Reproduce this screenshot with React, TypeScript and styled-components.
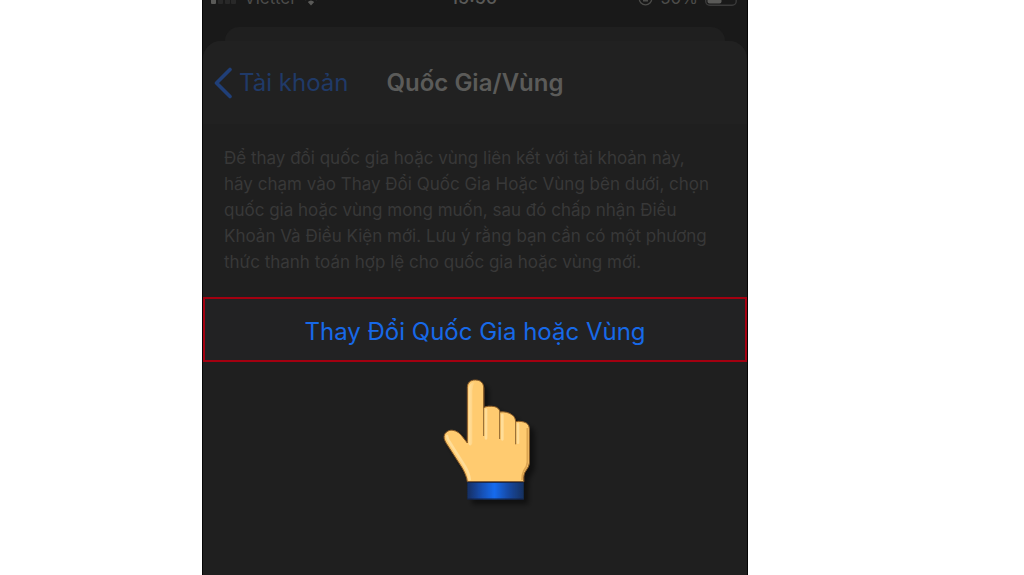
import React from "react";
import styled, { createGlobalStyle } from "styled-components";

const GlobalStyle = createGlobalStyle`
  * { box-sizing: border-box; }
  body {
    margin: 0;
    background: #ffffff;
    font-family: Inter, "Liberation Sans", sans-serif;
  }
`;

const Page = styled.main`
  display: grid;
  grid-template-columns: 202fr 546fr 276fr;
  min-height: 100vh;
  overflow: hidden;
`;

const Phone = styled.section`
  grid-column: 2;
  display: flex;
  flex-direction: column;
  background: #191919;
  border: solid #050505;
  border-width: 0 1px;
`;

const StatusBar = styled.div`
  height: 27px;
  padding: 0 10px 0 8px;
`;

const StatusRow = styled.div`
  display: grid;
  grid-template-columns: 1fr auto 1fr;
  align-items: center;
  margin-top: -13px;
  font-size: 17px;
  line-height: 22px;
  color: #4c4c4a;
`;

const StatusGroup = styled.div<{ $end?: boolean }>`
  display: flex;
  align-items: center;
  gap: 7px;
  justify-content: ${(p) => (p.$end ? "flex-end" : "flex-start")};
`;

const Clock = styled.time`
  font-size: 18px;
  font-weight: 500;
  color: #5a5a58;
`;

const BackSheet = styled.div`
  height: 14px;
  margin: 0 22px;
  border-radius: 14px 14px 0 0;
  background: #1f1f1f;
`;

const Sheet = styled.div`
  flex: 1;
  border-radius: 18px 18px 0 0;
  background: #1f1f1f;
`;

const NavBar = styled.header`
  display: grid;
  grid-template-columns: 1fr auto 1fr;
  align-items: center;
  height: 83px;
  padding: 0 11px;
  border-radius: 18px 18px 0 0;
  background: #212121;
`;

const BackLink = styled.a`
  display: flex;
  align-items: center;
  gap: 7px;
  color: #203a68;
  font-size: 24px;
  line-height: 32px;
  text-decoration: none;
  white-space: nowrap;
`;

const Title = styled.h1`
  margin: 0;
  color: #5b5b59;
  font-size: 24px;
  font-weight: 600;
  line-height: 32px;
  white-space: nowrap;
`;

const Description = styled.p`
  margin: 0;
  padding: 21px 20px 22px 21px;
  color: #383838;
  font-size: 17px;
  line-height: 26px;
`;

const Line = styled.span`
  display: block;
  white-space: nowrap;
`;

const ChangeButton = styled.button`
  display: block;
  width: 100%;
  height: 65px;
  padding: 4px 0 0;
  border: 2px solid #a30010;
  background: #222223;
  color: #1769e8;
  font-family: inherit;
  font-size: 24px;
  line-height: 32px;
`;

const Pointer = styled.div`
  display: flex;
  justify-content: center;
  padding-top: 8px;
`;

const paragraph = [
  "Để thay đổi quốc gia hoặc vùng liên kết với tài khoản này,",
  "hãy chạm vào Thay Đổi Quốc Gia Hoặc Vùng bên dưới, chọn",
  "quốc gia hoặc vùng mong muốn, sau đó chấp nhận Điều",
  "Khoản Và Điều Kiện mới. Lưu ý rằng bạn cần có một phương",
  "thức thanh toán hợp lệ cho quốc gia hoặc vùng mới.",
];

const SignalIcon = () => (
  <svg width="26" height="14" viewBox="0 0 26 14" aria-hidden="true">
    <rect x="0" y="6" width="5" height="7" rx="1" fill="#5a5a58" />
    <rect x="7" y="4" width="5" height="9" rx="1" fill="#282828" />
    <rect x="14" y="2" width="5" height="11" rx="1" fill="#282828" />
    <rect x="20" y="0" width="5" height="13" rx="1" fill="#282828" />
  </svg>
);

const WifiIcon = () => (
  <svg width="20" height="15" viewBox="0 0 20 15" aria-hidden="true">
    <path d="M1 4.5Q10-3 19 4.5M4 8.500Q10 3 16 8.500" fill="none" stroke="#5a5a58" strokeWidth="2.4" />
    <path d="M6.8 11Q10 8 13.2 11L10 14.5Z" fill="#5a5a58" />
  </svg>
);

const RotationLockIcon = () => (
  <svg width="15" height="15" viewBox="0 0 15 15" aria-hidden="true">
    <circle cx="7.5" cy="7.5" r="6.300" fill="none" stroke="#4c4c4a" strokeWidth="1.3" />
    <path d="M5 6.500h5v4H5z" fill="#4c4c4a" />
    <path d="M6 7V5.500a1.500 1.500 0 0 1 3 0V7" fill="none" stroke="#4c4c4a" />
  </svg>
);

const BatteryIcon = () => (
  <svg width="32" height="15" viewBox="0 0 32 15" aria-hidden="true">
    <rect x="0.700" y="0.700" width="30.500" height="13.500" rx="4" fill="none" stroke="#3a3a3a" strokeWidth="1.400" />
    <rect x="2.500" y="2.500" width="14" height="10" rx="2" fill="#5a5a58" />
  </svg>
);

const ChevronLeft = () => (
  <svg width="18" height="32" viewBox="0 0 18 32" aria-hidden="true">
    <path d="M16 2.500L2.500 16L16 29.500" fill="none" stroke="#203f78" strokeWidth="3.600" strokeLinecap="round" strokeLinejoin="round" />
  </svg>
);

const handShape =
  "M112 335C111 322 103 305 96 293L49 220C43 210 40 202 44 193C48 185 58 179 69 181C81 183 90 190 98 201L112 219V53C112 38 121 30 136 30C152 30 161 39 161 54V113C169 108 183 108 194 110C203 112 209 118 210 126C221 124 238 127 248 136C254 141 256 147 257 155C267 153 280 154 289 159C295 163 298 169 298 178V279C298 295 281 303 281 320V335Z";

const PointingHand = () => (
  <svg width="150" height="145" viewBox="-90 0 450 435" role="img" aria-label="Bàn tay chỉ lên">
    <defs>
      <linearGradient id="cuff">
        <stop offset="0" stopColor="#132d60" />
        <stop offset="0.260" stopColor="#1650b4" />
        <stop offset="0.480" stopColor="#166bee" />
        <stop offset="0.740" stopColor="#1648a0" />
        <stop offset="1" stopColor="#14305e" />
      </linearGradient>
      <linearGradient id="shine">
        <stop offset="0" stopColor="#ffe0a0" />
        <stop offset="1" stopColor="#ffcb70" />
      </linearGradient>
      <filter id="shadow" x="-20%" y="-20%" width="150%" height="150%">
        <feDropShadow dx="14" dy="14" stdDeviation="8" floodColor="#000000" floodOpacity="0.500" />
      </filter>
      <filter id="soften">
        <feGaussianBlur stdDeviation="2" />
      </filter>
    </defs>
    <g filter="url(#shadow)">
      <path d={handShape} fill="#ffcb70" stroke="#8a5b27" strokeWidth="3" />
      <rect x="112" y="336" width="169" height="52" fill="url(#cuff)" />
      <path d="M112 337H281M112 387H281" stroke="#142340" strokeWidth="3" />
    </g>
    <path d="M116 222V54Q119 36 136 35Q127 48 127 62V220Q121 232 116 222Z" fill="url(#shine)" />
    <g fill="none" stroke="#ffdd98" strokeWidth="8" strokeLinecap="round" filter="url(#soften)">
      <path d="M168 119V205M217 135V208M264 163V218" />
      <path d="M51 198Q52 209 62 221L105 289Q117 310 119 328" />
    </g>
    <path d="M161 53V198M209 125V207M257 155V223" fill="none" stroke="#8a622e" strokeWidth="3" />
    <path d="M292 174V276Q292 289 281 303Q276 313 276 330" fill="none" stroke="#dda551" strokeWidth="5" filter="url(#soften)" />
  </svg>
);

export default function App() {
  return (
    <>
      <GlobalStyle />
      <Page>
        <Phone>
          <StatusBar>
            <StatusRow>
              <StatusGroup>
                <SignalIcon />
                <span>Viettel</span>
                <WifiIcon />
              </StatusGroup>
              <Clock>15:50</Clock>
              <StatusGroup $end>
                <RotationLockIcon />
                <span>50%</span>
                <BatteryIcon />
              </StatusGroup>
            </StatusRow>
          </StatusBar>
          <BackSheet />
          <Sheet>
            <NavBar>
              <BackLink href="#account">
                <ChevronLeft />
                Tài khoản
              </BackLink>
              <Title>Quốc Gia/Vùng</Title>
            </NavBar>
            <Description>
              {paragraph.map((text) => (
                <Line key={text}>{text}</Line>
              ))}
            </Description>
            <ChangeButton type="button">Thay Đổi Quốc Gia hoặc Vùng</ChangeButton>
            <Pointer>
              <PointingHand />
            </Pointer>
          </Sheet>
        </Phone>
      </Page>
    </>
  );
}
